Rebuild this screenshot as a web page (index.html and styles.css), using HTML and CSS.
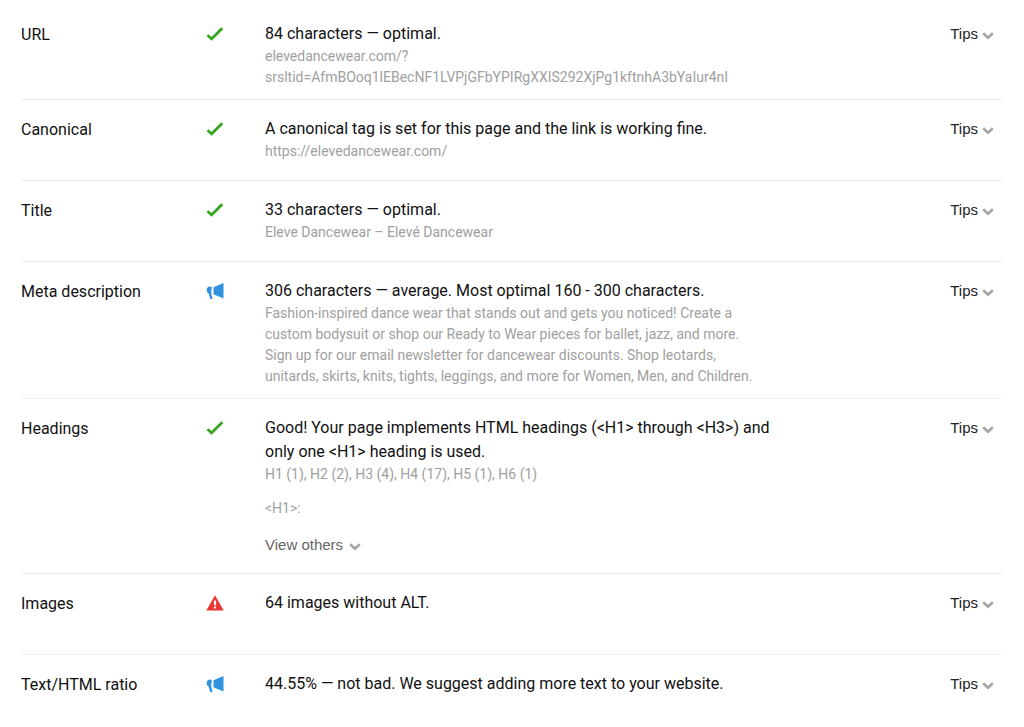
FILE: index.html
```html
<!DOCTYPE html>
<html lang="en">
    <head>
        <meta charset="UTF-8">
        <title>Page review</title>
        <link rel="stylesheet" href="styles.css">
    </head>
    <body>
        <!-- shared icons -->
        <svg class="sprite" aria-hidden="true">
            <symbol id="check" viewBox="0 0 18 14">
                <path d="M1.5 8.2L5.6 11.8L16.3 1.3" fill="none" stroke="#36a420" stroke-width="2.7"/>
            </symbol>
            <symbol id="horn" viewBox="0 0 18 18">
                <path d="M7.5 5.3L17.5 1V16.5L7.5 12.2Z" fill="#3093e0"/>
                <path d="M5.8 4.8L5.2 11L6.5 17H4.2L2.6 11.6C0.2 10.6 0 5.6 2.6 4.8Z" fill="#3093e0"/>
            </symbol>
            <symbol id="warning" viewBox="0 0 18 16">
                <path d="M9 0.3L17.7 15.6H0.3Z" fill="#ee3430"/>
                <path d="M7.9 5.5H10.1V10.2H7.9ZM7.9 11.5H10.1V13.5H7.9Z" fill="#fff"/>
            </symbol>
            <symbol id="arrow" viewBox="0 0 12 8">
                <path d="M1.2 1.2L6 5.8L10.8 1.2" fill="none" stroke="#a5a5a5" stroke-width="2.6"/>
            </symbol>
        </svg>

        <main class="review">
            <section class="row">
                <h2 class="name">URL</h2>
                <svg class="status check"><use href="#check"/></svg>
                <div class="result">
                    <p class="verdict">84 characters — optimal.</p>
                    <p class="detail">elevedancewear.com/?<wbr>srsltid=AfmBOoq1lEBecNF1LVPjGFbYPIRgXXIS292XjPg1kftnhA3bYaIur4nI</p>
                </div>
                <button class="toggle" type="button">Tips <svg class="arrow"><use href="#arrow"/></svg></button>
            </section>
            <section class="row">
                <h2 class="name">Canonical</h2>
                <svg class="status check"><use href="#check"/></svg>
                <div class="result">
                    <p class="verdict">A canonical tag is set for this page and the link is working fine.</p>
                    <p class="detail">https://elevedancewear.com/</p>
                </div>
                <button class="toggle" type="button">Tips <svg class="arrow"><use href="#arrow"/></svg></button>
            </section>
            <section class="row">
                <h2 class="name">Title</h2>
                <svg class="status check"><use href="#check"/></svg>
                <div class="result">
                    <p class="verdict">33 characters — optimal.</p>
                    <p class="detail">Eleve Dancewear – Elevé Dancewear</p>
                </div>
                <button class="toggle" type="button">Tips <svg class="arrow"><use href="#arrow"/></svg></button>
            </section>
            <section class="row">
                <h2 class="name">Meta description</h2>
                <svg class="status horn"><use href="#horn"/></svg>
                <div class="result">
                    <p class="verdict">306 characters — average. Most optimal 160 - 300 characters.</p>
                    <p class="detail">Fashion-inspired dance wear that stands out and gets you noticed! Create a custom bodysuit or shop our Ready to Wear pieces for ballet, jazz, and more. Sign up for our email newsletter for dancewear discounts. Shop leotards, unitards, skirts, knits, tights, leggings, and more for Women, Men, and Children.</p>
                </div>
                <button class="toggle" type="button">Tips <svg class="arrow"><use href="#arrow"/></svg></button>
            </section>
            <section class="row">
                <h2 class="name">Headings</h2>
                <svg class="status check"><use href="#check"/></svg>
                <div class="result">
                    <p class="verdict">Good! Your page implements HTML headings (&lt;H1&gt; through &lt;H3&gt;) and only one &lt;H1&gt; heading is used.</p>
                    <p class="detail">H1 (1), H2 (2), H3 (4), H4 (17), H5 (1), H6 (1)</p>
                    <p class="detail first-heading">&lt;H1&gt;:</p>
                    <button class="toggle others" type="button">View others <svg class="arrow"><use href="#arrow"/></svg></button>
                </div>
                <button class="toggle" type="button">Tips <svg class="arrow"><use href="#arrow"/></svg></button>
            </section>
            <section class="row">
                <h2 class="name">Images</h2>
                <svg class="status warning"><use href="#warning"/></svg>
                <div class="result">
                    <p class="verdict">64 images without ALT.</p>
                </div>
                <button class="toggle" type="button">Tips <svg class="arrow"><use href="#arrow"/></svg></button>
            </section>
            <section class="row">
                <h2 class="name">Text/HTML ratio</h2>
                <svg class="status horn"><use href="#horn"/></svg>
                <div class="result">
                    <p class="verdict">44.55% — not bad. We suggest adding more text to your website.</p>
                </div>
                <button class="toggle" type="button">Tips <svg class="arrow"><use href="#arrow"/></svg></button>
            </section>
        </main>
    </body>
</html>
```
FILE: styles.css
```css
*{
    box-sizing:border-box;
}

body{
    margin:0;
    background-color:#fff;
    color:#111;
    font-family:Roboto, sans-serif;
    font-size:16px;
    line-height:24px;
}

.sprite{
    display:none;
}

.review{
    padding:5px 22px 0 21px;
}

.row{
    display:grid;
    grid-template-columns:185px 59px minmax(0, 515px) 1fr;
    align-items:start;
    min-height:81px;
    padding:17px 8px 11px 0;
    border-bottom:1px solid #eee;
}

.row:last-child{
    border-bottom:none;
}

.name{
    margin:0;
    padding-top:1px;
    font-size:16px;
    font-weight:400;
}

.status{
    width:18px;
    height:24px;
}

.verdict,
.detail{
    margin:0;
}

.detail{
    max-width:492px;
    color:#a0a0a0;
    font-size:14px;
    line-height:21px;
}

.first-heading{
    margin-top:13px;
}

.toggle{
    display:flex;
    align-items:center;
    justify-self:end;
    gap:4px;
    padding:0;
    border:none;
    background:none;
    color:#222;
    font-family:"Liberation Sans", Arial, sans-serif;
    font-size:15px;
    line-height:24px;
    cursor:pointer;
}

.arrow{
    width:12px;
    height:8px;
    margin-top:4px;
}

.others{
    justify-self:start;
    gap:6px;
    margin:14px 0 5px;
    color:#666;
}
```
